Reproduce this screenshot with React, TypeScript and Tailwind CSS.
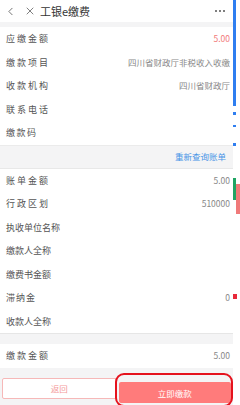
import { ChevronLeft, X } from 'lucide-react';

const font = { fontFamily: '"Noto Sans CJK SC", "Noto Sans", sans-serif' };

type Row = { label: string; value?: string; track?: string; red?: boolean };

const topRows: Row[] = [
  { label: '应缴金额', value: '5.00', track: 'tracking-[2px]', red: true },
  { label: '缴款项目', value: '四川省财政厅非税收入收缴', track: 'tracking-[2px]' },
  { label: '收款机构', value: '四川省财政厅', track: 'tracking-[2px]' },
  { label: '联系电话', track: 'tracking-[2px]' },
  { label: '缴款码', track: 'tracking-[1.5px]' },
];

const billRows: Row[] = [
  { label: '账单金额', value: '5.00', track: 'tracking-[2px]' },
  { label: '行政区划', value: '510000', track: 'tracking-[2px]' },
  { label: '执收单位名称' },
  { label: '缴款人全称' },
  { label: '缴费书金额' },
  { label: '滞纳金', value: '0', track: 'tracking-[1px]' },
  { label: '收款人全称' },
];

function InfoRow({ row }: { row: Row }) {
  return (
    <div className="h-[23.5px] flex items-center justify-between pl-[6px] pr-[3px]">
      <span className={`text-[9px] text-[#555] ${row.track ?? ''}`}>{row.label}</span>
      {row.value && (
        <span className={`text-[8.5px] ${row.red ? 'text-[#f27b7b]' : 'text-[#888]'}`}>{row.value}</span>
      )}
    </div>
  );
}

export default function App() {
  return (
    <div className="w-[240px] h-[405px] flex bg-white overflow-hidden" style={font}>
      {/* Main page */}
      <div className="w-[233px] h-full flex flex-col bg-[#f4f4f5]">
        {/* Header */}
        <div className="h-[22px] bg-white flex items-center pl-[4px] pr-[8px] shrink-0">
          <ChevronLeft className="w-[13px] h-[13px] text-[#555]" strokeWidth={1.5} />
          <X className="w-[12px] h-[12px] text-[#555] ml-[7px]" strokeWidth={1.5} />
          <span className="ml-[4px] text-[11px] text-[#333] leading-none">工银e缴费</span>
          <div className="ml-auto flex gap-[2px] items-center">
            <span className="w-[2px] h-[2px] rounded-full bg-[#555]" />
            <span className="w-[2px] h-[2px] rounded-full bg-[#555]" />
            <span className="w-[2px] h-[2px] rounded-full bg-[#555]" />
          </div>
        </div>

        <div className="h-[5px] shrink-0" />

        {/* Payment info */}
        <div className="bg-white border-b border-[#ebebeb]">
          {topRows.map((r) => (
            <InfoRow key={r.label} row={r} />
          ))}
        </div>

        {/* Re-query link */}
        <div className="h-[23px] flex items-center justify-end pr-[7px] border-b border-[#e8e8e8] shrink-0">
          <span className="text-[8.5px] text-[#4a94e6]">重新查询账单</span>
        </div>

        {/* Bill details */}
        <div className="bg-white border-b border-[#e6e6e6]">
          {billRows.map((r) => (
            <InfoRow key={r.label} row={r} />
          ))}
        </div>

        <div className="h-[10px] shrink-0" />

        <div className="bg-white">
          <InfoRow row={{ label: '缴款金额', value: '5.00', track: 'tracking-[2px]' }} />
        </div>

        {/* Buttons */}
        <div className="flex gap-[2px] px-[2px] mt-[10px]">
          <button className="flex-1 h-[21px] bg-white border border-[#f6b8b8] rounded-[2px] text-[8.5px] text-[#f49a9a]">
            返回
          </button>
          <div className="flex-1 relative">
            <button className="w-full h-[21px] bg-[#ff7b7b] rounded-[2px] text-[8.5px] text-white">
              立即缴款
            </button>
            <div className="absolute -left-[4px] -right-[2px] -top-[5px] -bottom-[4px] border-[2px] border-[#e5121d] rounded-[9px]" />
          </div>
        </div>
      </div>

      {/* Edge of the neighbouring screen */}
      <div className="w-[7px] h-full flex flex-col bg-white">
        <div className="w-[3px] h-[106px] bg-[#2f7ef0]" />
        <div className="w-[3px] h-[3px] mt-[6px] bg-[#2f7ef0]" />
        <div className="w-[3px] h-[2px] mt-[10px] bg-[#2f7ef0]" />
        <div className="w-[3px] h-[3px] mt-[16px] bg-[#2f7ef0]" />
        <div className="flex mt-[32px]">
          <div className="w-[3px] h-[22px] bg-[#1fa463]" />
          <div className="w-[4px] h-[30px] mt-[6px] bg-[#f07a7a]" />
        </div>
        <div className="w-[4px] h-[5px] mt-[80px] bg-[#e8293a]" />
      </div>
    </div>
  );
}
